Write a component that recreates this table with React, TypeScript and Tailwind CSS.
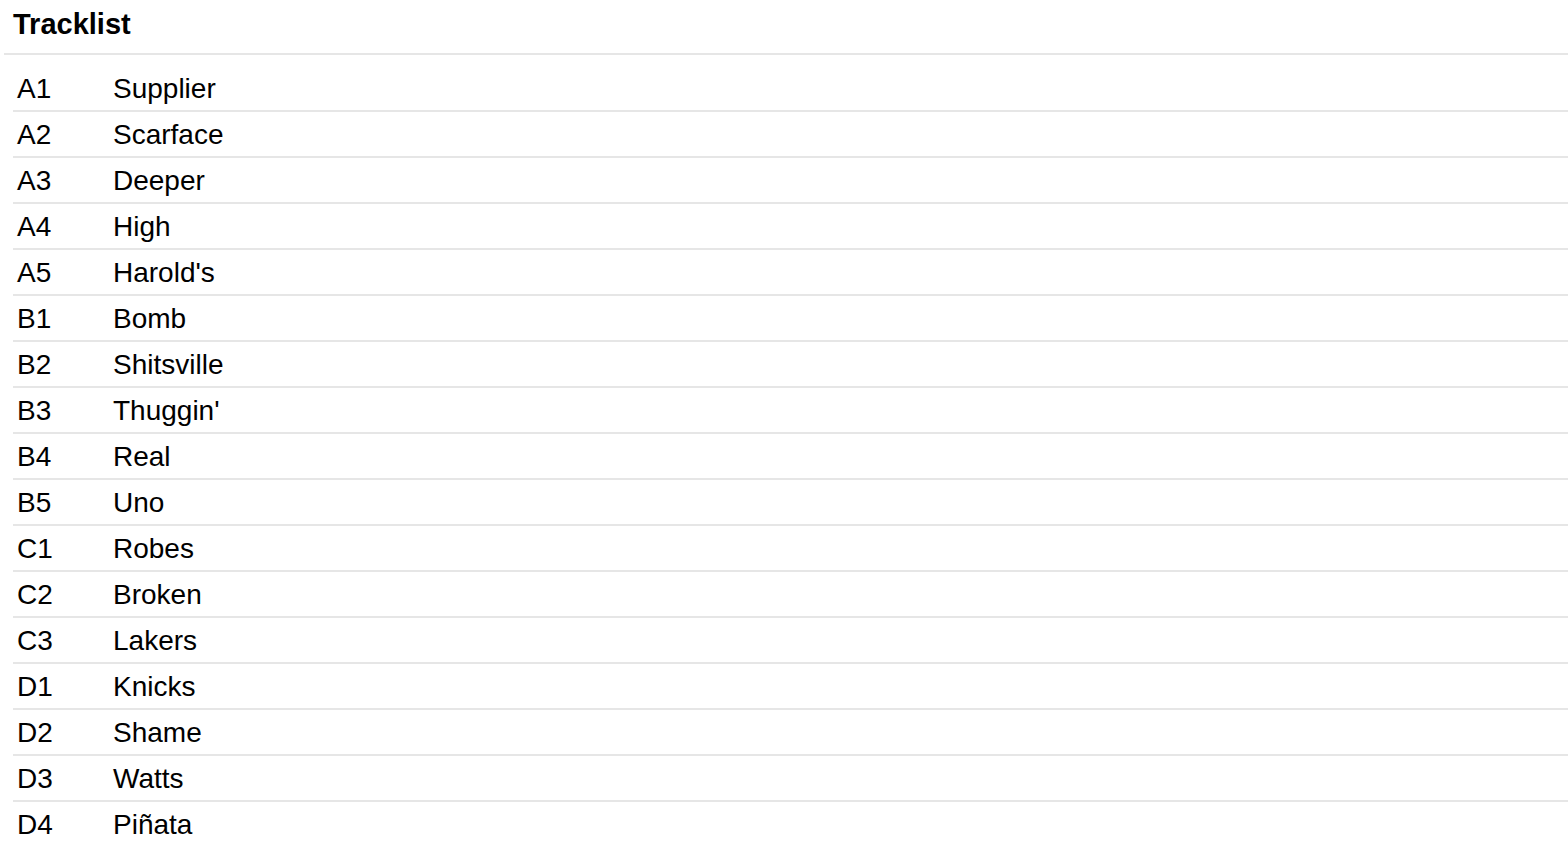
const tracks: [string, string][] = [
  ['A1', 'Supplier'],
  ['A2', 'Scarface'],
  ['A3', 'Deeper'],
  ['A4', 'High'],
  ['A5', "Harold's"],
  ['B1', 'Bomb'],
  ['B2', 'Shitsville'],
  ['B3', "Thuggin'"],
  ['B4', 'Real'],
  ['B5', 'Uno'],
  ['C1', 'Robes'],
  ['C2', 'Broken'],
  ['C3', 'Lakers'],
  ['D1', 'Knicks'],
  ['D2', 'Shame'],
  ['D3', 'Watts'],
  ['D4', 'Piñata'],
]

export default function App() {
  return (
    <div className="min-h-screen bg-white pl-[4px] text-black" style={{ fontFamily: '"Liberation Sans", Arial, sans-serif' }}>
      {/* Header */}
      <div className="flex h-[55px] items-center border-b-2 border-[#e6e6e6] pl-[9px] pb-[4px]">
        <h2 className="text-[29px] font-bold leading-none">Tracklist</h2>
      </div>

      {/* Rows */}
      <ul className="ml-[9px] mt-[11px]">
        {tracks.map(([pos, title], i) => (
          <li
            key={pos}
            className={
              i === tracks.length - 1
                ? 'flex h-[44px] items-center pl-[4px] pt-[2px] text-[28px] leading-none'
                : 'flex h-[46px] items-center border-b-2 border-[#e6e6e6] pl-[4px] pt-[2px] text-[28px] leading-none'
            }
          >
            <span className="w-[96px]">{pos}</span>
            <span>{title}</span>
          </li>
        ))}
      </ul>
    </div>
  )
}
